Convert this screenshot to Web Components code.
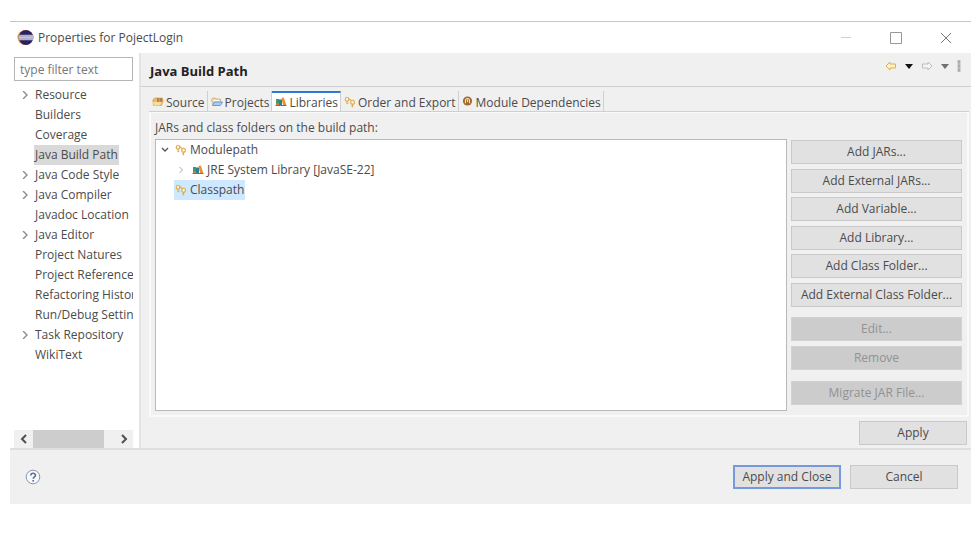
<!DOCTYPE html>
<html lang="en">
<head>
<meta charset="utf-8">
<title>Properties for PojectLogin</title>
<style>
  body { margin: 0; background: #fff; color: #4b4b4b; font: 12px/20px "Open Sans", "Noto Sans", sans-serif; }
</style>
</head>
<body>
<properties-dialog></properties-dialog>
<script>
const define = (name, html, setup) => {
  const template = document.createElement('template');
  template.innerHTML = html;
  customElements.define(name, class extends HTMLElement {
    constructor() {
      super();
      this.attachShadow({ mode: 'open' }).append(template.content.cloneNode(true));
    }
    connectedCallback() { if (setup) setup(this, this.shadowRoot); }
  });
};

const svg = (w, h, body) => `<svg width="${w}" height="${h}" viewBox="0 0 ${w} ${h}" fill="none" aria-hidden="true">${body}</svg>`;
const icons = {
  eclipse: svg(17, 17, '<circle cx="7.800" cy="8.500" r="7.400" fill="#f2a55c"/><circle cx="9" cy="8.500" r="7.400" fill="#2b2160"/><path d="M2.100 5.800h13.900l.4 2.700-.4 2.700H2.100l-.5-2.700z" fill="#b0b0c6"/><path d="M1.700 8.500h14.600" stroke="#c7c6d6"/>'),
  minimize: svg(12, 12, '<path d="M1 5.500h10" stroke="#d0d0d0"/>'),
  maximize: svg(12, 12, '<path d="M.5.500h11v11H.5z" stroke="#999"/>'),
  close: svg(12, 12, '<path d="M1 1l10 10M11 1L1 11" stroke="#777"/>'),
  back: svg(12, 10, '<path d="M5 1 1 5l4 4V7h5.500V3H5z" fill="#fff3c8" stroke="#e3ad52"/>'),
  forward: svg(12, 10, '<path d="M7 1l4 4-4 4V7H1.500V3H7z" fill="#f5f5f5" stroke="#bdbdbd"/>'),
  menu: svg(8, 5, '<path d="M0 0h8L4 5z" fill="#111"/>'),
  menuDim: svg(8, 5, '<path d="M0 0h8L4 5z" fill="#6d7178"/>'),
  more: svg(4, 12, '<path d="M2 0v12" stroke="#bbb" stroke-width="3"/><path d="M2 1v10" stroke="#999" stroke-dasharray="2 2"/>'),
  source: svg(12, 12, '<path d="M.8 4 2.500 2h7.700l1 2.500L9.500 9.500H1.500z" fill="#e8b96f" stroke="#cf9f58" stroke-width=".7"/><path d="M5 2.500h5.200v3H5z" fill="#8d633c"/><path d="M7.500 2.500v3M5 4h5.200" stroke="#dcb98a" stroke-width=".7"/><path d="M1 6h8.500l-1.500 3.500H2z" fill="#ffdd93"/>'),
  projects: svg(12, 12, '<path d="M.5 3.500 1.500 2h3l1 1h4v3L8 9H2z" fill="#f2d49a" stroke="#c9a66a" stroke-width=".7"/><path d="M2.500 4.500h6" stroke="#fff"/><path d="M1.500 9.500 3.500 6h8l-2.200 3.500z" fill="#a8cdf5" stroke="#5b8dc9" stroke-width=".8"/>'),
  library: svg(12, 12, '<path d="M1 3h3v6H1z" fill="#3f9a68"/><path d="M4 3.500h3v5.500H4z" fill="#2e7f94"/><path d="M1 7.500h3V9H1z" fill="#d88043"/><path d="m6.500 2 2.300-.5L11.300 9H8z" fill="#ec9036"/><path d="M.5 9.500h11" stroke="#a0653a"/>'),
  path: svg(12, 12, '<g stroke="#dcab52" stroke-width="1.100" fill="#fff2cc"><ellipse cx="3" cy="3.300" rx="1.800" ry="2"/><path d="M3 5.300v3M3 7.300h1.500"/><ellipse cx="8.600" cy="6.200" rx="1.900" ry="2"/><path d="M8.600 8.200v3M8.600 10h-1.400"/><path d="m4.800 2.500 2.200 2.200"/></g>'),
  module: svg(12, 12, '<circle cx="5.500" cy="5" r="4.600" fill="#a3692c"/><path d="M3.500 7.300V4.500a2 2 0 0 1 4 0v2.800M5.500 3.500v2.500" stroke="#f1dfc5" stroke-width="1.100"/>'),
  right: svg(8, 8, '<path d="m2 0 4 4-4 4" stroke="#8b8b8b" stroke-width="1.400"/>'),
  rightThin: svg(8, 8, '<path d="m1.500 1 3 3-3 3" stroke="#aaa"/>'),
  down: svg(8, 8, '<path d="m1 2 3 3 3-3" stroke="#555" stroke-width="1.300"/>'),
  scrollLeft: svg(8, 10, '<path d="M6 1 2 5l4 4" stroke="#505050" stroke-width="2"/>'),
  scrollRight: svg(8, 10, '<path d="m2 1 4 4-4 4" stroke="#505050" stroke-width="2"/>'),
  help: svg(16, 16, '<circle cx="8" cy="8" r="6.800" fill="#f7f9fc" stroke="#8895ae"/><path d="M5.800 6.500c0-3 4.700-2.800 4.700-.3 0 1.700-2.300 1.500-2.300 3.500" stroke="#5b6f9c" stroke-width="1.600"/><path d="M8.200 11v1.600" stroke="#5b6f9c" stroke-width="1.700"/>')
};

define('ui-icon', `<style>:host{display:inline-flex;flex:none}svg{display:block}</style><span></span>`, (el, root) => {
  root.querySelector('span').innerHTML = icons[el.getAttribute('name')] || '';
});

define('push-button', `<style>
  :host{display:block}
  button{box-sizing:border-box;display:block;width:100%;height:24px;padding:0;border:1px solid #c9c9c9;background:#e1e1e1;color:inherit;font:inherit;line-height:22px;text-align:center;white-space:nowrap}
  button:disabled{background:#ccc;border-color:#d2d2d2;color:#929292}
  :host([primary]) button{border:2px solid #7599dc;line-height:20px}
</style><button type="button"><slot></slot></button>`, (el, root) => {
  root.querySelector('button').disabled = el.hasAttribute('disabled');
});

define('icon-button', `<style>
  :host{display:inline-flex}
  button{display:flex;padding:0;border:0;background:none}
</style><button type="button"><ui-icon></ui-icon></button>`, (el, root) => {
  root.querySelector('button').setAttribute('aria-label', el.getAttribute('label'));
  root.querySelector('ui-icon').outerHTML = `<ui-icon name="${el.getAttribute('name')}"></ui-icon>`;
});

define('title-bar', `<style>
  :host{display:flex;align-items:center;height:31px;padding:0 19px 0 7px;border-top:1px solid #c6c6c6}
  h1{flex:1;margin:0 0 0 4px;font:inherit}
  div{display:flex;gap:38px}
</style><ui-icon name="eclipse"></ui-icon><h1><slot></slot></h1>
<div><icon-button name="minimize" label="Minimize"></icon-button><icon-button name="maximize" label="Maximize"></icon-button><icon-button name="close" label="Close"></icon-button></div>`);

define('nav-item', `<style>
  :host{display:flex;align-items:center;height:20px;white-space:nowrap}
  i{display:flex;flex:none;width:18px;padding-left:5px;box-sizing:border-box}
  button{flex:none;padding:0 1px;border:0;background:none;color:inherit;font:inherit;line-height:20px}
  :host([selected]) button{background:#d9d9d9}
</style><i></i><button type="button"><slot></slot></button>`, (el, root) => {
  if (el.hasAttribute('branch')) root.querySelector('i').innerHTML = '<ui-icon name="right"></ui-icon>';
});

define('scroll-strip', `<style>
  :host{display:flex;align-items:stretch;height:18px;background:#f0f0f0}
  icon-button{width:19px;align-items:center;justify-content:center}
  div{flex:1}span{display:block;width:71px;height:100%;background:#cdcdcd}
</style><icon-button name="scrollLeft" label="Scroll left"></icon-button><div><span></span></div><icon-button name="scrollRight" label="Scroll right"></icon-button>`);

define('nav-pane', `<style>
  :host{display:flex;flex-direction:column;box-sizing:border-box;width:131px;flex:none;padding:4px 6px 0 4px;border-right:2px solid #e3e3e3}
  input{box-sizing:border-box;width:100%;height:24px;margin:0 0 4px;padding:0 5px;border:1px solid #b5b5b5;border-radius:0;background:#fff;font:inherit}
  input::placeholder{color:#777;opacity:1}
  nav{flex:1;overflow:hidden;padding-left:2px}
</style>
<input type="text" aria-label="Filter" placeholder="type filter text">
<nav aria-label="Properties">
<nav-item branch>Resource</nav-item><nav-item>Builders</nav-item><nav-item>Coverage</nav-item><nav-item selected>Java Build Path</nav-item><nav-item branch>Java Code Style</nav-item><nav-item branch>Java Compiler</nav-item><nav-item>Javadoc Location</nav-item><nav-item branch>Java Editor</nav-item><nav-item>Project Natures</nav-item><nav-item>Project References</nav-item><nav-item>Refactoring History</nav-item><nav-item>Run/Debug Settings</nav-item><nav-item branch>Task Repository</nav-item><nav-item>WikiText</nav-item>
</nav><scroll-strip></scroll-strip>`);

define('page-header', `<style>
  :host{display:flex;align-items:flex-start;height:33px;padding:0 10px 0 9px;border-bottom:1px solid #d0d0d0}
  h2{flex:1;margin:0;font:bold 13px/37px "Open Sans","Noto Sans",sans-serif;color:#222}
  div{display:flex;align-items:center;gap:8px;height:26px}
</style><h2><slot></slot></h2><div><icon-button name="back" label="Back"></icon-button><icon-button name="menu" label="Back history"></icon-button><icon-button name="forward" label="Forward"></icon-button><icon-button name="menuDim" label="Forward history"></icon-button><icon-button name="more" label="View menu"></icon-button></div>`);

define('tab-item', `<style>
  :host{display:block}
  button{box-sizing:border-box;display:flex;align-items:center;gap:2px;height:20px;padding:3px 2px 0 3px;border:0;border-right:1px solid #cfcfcf;background:none;color:inherit;font:inherit;line-height:16px;white-space:nowrap}
  ui-icon{margin-top:-2px}
  :host([selected]) button{background:#fff;border-top:2px solid #2b7ad8;padding-top:1px}
</style><button type="button" role="tab"><ui-icon></ui-icon><span><slot></slot></span></button>`, (el, root) => {
  root.querySelector('ui-icon').outerHTML = `<ui-icon name="${el.getAttribute('icon')}"></ui-icon>`;
  root.querySelector('button').setAttribute('aria-selected', el.hasAttribute('selected'));
});

define('tree-row', `<style>
  :host{display:flex;align-items:center;height:20px;white-space:nowrap}
  :host([level="1"]){padding-left:17px}
  i{display:flex;flex:none;justify-content:center;width:18px}
  button{display:flex;align-items:center;gap:3px;padding:0 1px;border:0;background:none;color:inherit;font:inherit;line-height:20px}
  :host([selected]) button{background:#cde8ff}
</style><i></i><button type="button"><ui-icon></ui-icon><slot></slot></button>`, (el, root) => {
  root.querySelector('ui-icon').outerHTML = `<ui-icon name="${el.getAttribute('icon')}"></ui-icon>`;
  if (el.hasAttribute('arrow')) root.querySelector('i').innerHTML = `<ui-icon name="${el.getAttribute('arrow')}"></ui-icon>`;
});

define('library-panel', `<style>
  :host{display:flex;flex:1;flex-direction:column;margin:4px 2px 0 8px}
  .tabs{display:flex;border-bottom:1px solid #cfcfcf}
  section{display:flex;flex:1;flex-direction:column;padding:5px 5px 4px 4px;border:solid #f9f9f9;border-width:1px 2px 2px}
  p{margin:0 0 1px}
  .columns{display:grid;grid-template-columns:1fr 171px;gap:4px;flex:1}
  .tree{box-sizing:border-box;border:1px solid #b9b9b9;background:#fff}
  .group{display:flex;flex-direction:column;justify-content:space-between}
  .actions{display:flex;flex-direction:column;padding-top:1px}
  .add{height:167px;margin-bottom:10px}
  .edit{height:53px;margin-bottom:11px}
</style>
<div class="tabs" role="tablist"><tab-item icon="source">Source</tab-item><tab-item icon="projects">Projects</tab-item><tab-item icon="library" selected>Libraries</tab-item><tab-item icon="path">Order and Export</tab-item><tab-item icon="module">Module Dependencies</tab-item></div>
<section><p>JARs and class folders on the build path:</p>
<div class="columns"><div class="tree"><tree-row icon="path" arrow="down">Modulepath</tree-row><tree-row level="1" icon="library" arrow="rightThin">JRE System Library [JavaSE-22]</tree-row><tree-row icon="path" selected>Classpath</tree-row></div>
<div class="actions"><div class="group add"><push-button>Add JARs...</push-button><push-button>Add External JARs...</push-button><push-button>Add Variable...</push-button><push-button>Add Library...</push-button><push-button>Add Class Folder...</push-button><push-button>Add External Class Folder...</push-button></div>
<div class="group edit"><push-button disabled>Edit...</push-button><push-button disabled>Remove</push-button></div><push-button disabled>Migrate JAR File...</push-button></div></div></section>`);

define('dialog-footer', `<style>
  :host{display:flex;align-items:center;height:54px;padding:0 13px 0 15px;border-top:2px solid #dfdfdf;background:#f0f0f0;gap:9px}
  icon-button{margin-right:auto}
  push-button{width:108px}
</style><icon-button name="help" label="Help"></icon-button><push-button primary>Apply and Close</push-button><push-button>Cancel</push-button>`);

define('properties-dialog', `<style>
  :host{display:flex;flex-direction:column;box-sizing:border-box;min-height:100vh;padding:21px 0 30px 10px}
  main{display:flex;flex:1}
  article{display:flex;flex:1;min-width:0;flex-direction:column;background:#f0f0f0}
  .apply{display:flex;justify-content:flex-end;padding:4px 4px 3px}
  .apply push-button{width:108px}
</style>
<title-bar>Properties for PojectLogin</title-bar>
<main><nav-pane></nav-pane><article><page-header>Java Build Path</page-header><library-panel></library-panel><div class="apply"><push-button>Apply</push-button></div></article></main>
<dialog-footer></dialog-footer>`);
</script>
</body>
</html>
